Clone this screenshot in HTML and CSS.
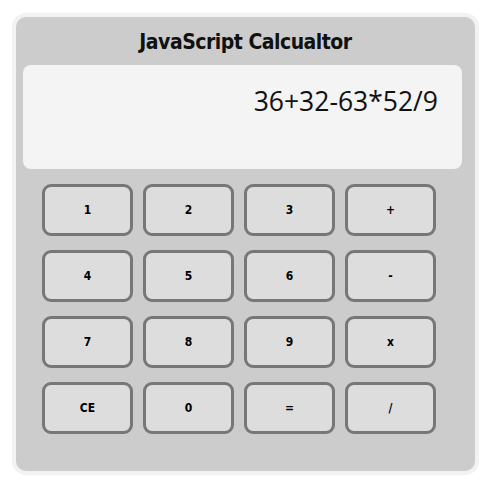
FILE: index.html
```html
<!DOCTYPE html>
<html>
<head>
<meta charset="utf-8">
<link rel="stylesheet" href="styles.css">
</head>
<body>
<div class="calc">
  <h1 class="title">JavaScript Calcualtor</h1>
  <div class="display">36+32-63*52/9</div>
  <div class="keys">
    <button class="key">1</button>
    <button class="key">2</button>
    <button class="key">3</button>
    <button class="key">+</button>
    <button class="key">4</button>
    <button class="key">5</button>
    <button class="key">6</button>
    <button class="key">-</button>
    <button class="key">7</button>
    <button class="key">8</button>
    <button class="key">9</button>
    <button class="key">x</button>
    <button class="key">CE</button>
    <button class="key">0</button>
    <button class="key">=</button>
    <button class="key">/</button>
  </div>
</div>
</body>
</html>
```

FILE: styles.css
```css
html, body {
  margin: 0;
  padding: 0;
  background: #ffffff;
}
.calc {
  box-sizing: border-box;
  width: 467px;
  height: 462px;
  margin: 13px 0 0 12px;
  border: 4px solid #f2f2f2;
  border-radius: 14px;
  background: #cccccc;
  display: flex;
  flex-direction: column;
}
.title {
  margin: 0;
  height: 48px;
  box-sizing: border-box;
  padding-top: 13px;
  text-align: center;
  font-family: "DejaVu Sans Condensed", "DejaVu Sans", sans-serif;
  font-stretch: condensed;
  font-weight: bold;
  font-size: 21px;
  line-height: 24px;
  color: #111;
  letter-spacing: -0.5px;
}
.display {
  box-sizing: border-box;
  width: 439px;
  height: 104px;
  margin-left: 7px;
  background: #f4f4f4;
  border-radius: 8px;
  text-align: right;
  padding: 18px 24px 0 0;
  font-family: "Open Sans", sans-serif;
  font-size: 26.5px;
  line-height: 36px;
  color: #111;
}
.keys {
  display: grid;
  grid-template-columns: repeat(4, 91px);
  grid-auto-rows: 52px;
  column-gap: 10px;
  row-gap: 14px;
  margin: 15px 0 0 26px;
}
.key {
  box-sizing: border-box;
  background: #dddddd;
  border: 3px solid #777777;
  border-radius: 9px;
  font-family: "DejaVu Sans Condensed", "DejaVu Sans", sans-serif;
  font-stretch: condensed;
  font-weight: bold;
  font-size: 12px;
  color: #000;
  padding: 0;
}
```
